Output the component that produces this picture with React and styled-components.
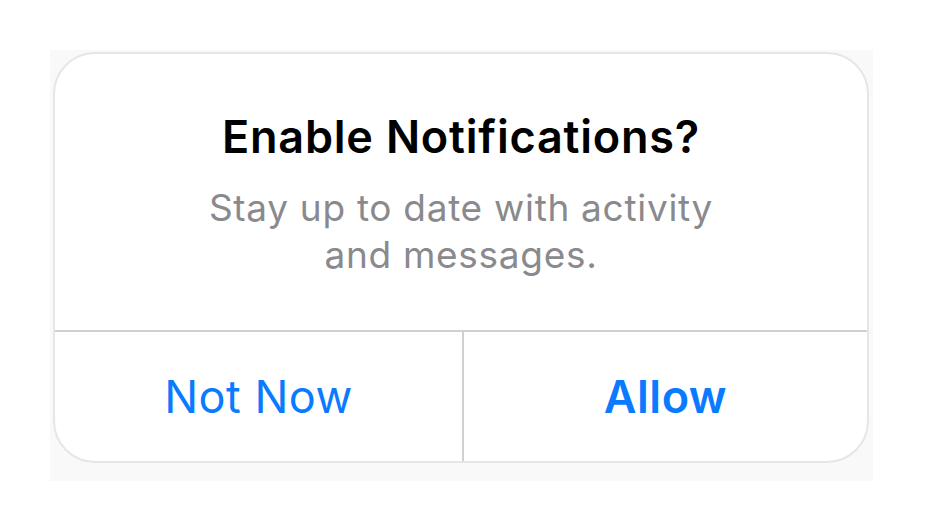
import React from 'react';
import styled, { createGlobalStyle } from 'styled-components';

const GlobalStyle = createGlobalStyle`
  html, body {
    margin: 0;
    padding: 0;
    background: #ffffff;
    font-family: Inter, "Noto Sans", "Liberation Sans", sans-serif;
  }
`;

const Page = styled.div`
  width: 925px;
  height: 532px;
  padding: 50px 0 0 50px;
  box-sizing: border-box;
`;

const Backdrop = styled.div`
  width: 823px;
  height: 431px;
  background: #f9f9f9;
  padding: 2px 4px 0 3px;
  box-sizing: border-box;
`;

const Alert = styled.div`
  width: 816px;
  height: 411px;
  box-sizing: border-box;
  background: #ffffff;
  border: 2px solid #e6e6e6;
  border-radius: 42px;
  display: flex;
  flex-direction: column;
  overflow: hidden;
`;

const Body = styled.div`
  height: 276px;
  box-sizing: border-box;
  padding-top: 57px;
  display: flex;
  flex-direction: column;
  align-items: center;
  text-align: center;
`;

const Title = styled.h1`
  margin: 0;
  font-size: 45px;
  line-height: 52px;
  font-weight: 600;
  color: #000000;
  letter-spacing: 0.8px;
`;

const Message = styled.p`
  margin: 21px 0 0;
  font-size: 37px;
  line-height: 47px;
  font-weight: 400;
  color: #8a8a8e;
  letter-spacing: 0.7px;
  width: 560px;
`;

const Actions = styled.div`
  flex: 1;
  display: grid;
  grid-template-columns: 407px 1fr;
  border-top: 2px solid #d0d0d0;
`;

const Action = styled.button`
  border: 0;
  background: transparent;
  font-family: inherit;
  font-size: 45px;
  letter-spacing: 0.5px;
  font-weight: ${p => (p.$primary ? 600 : 400)};
  color: #0a7aff;
  display: flex;
  align-items: center;
  justify-content: center;
  padding: 0;
  cursor: pointer;
  & + & {
    border-left: 2px solid #d0d0d0;
  }
`;

export default function App() {
  return (
    <>
      <GlobalStyle />
      <Page>
        <Backdrop>
          <Alert>
            <Body>
              <Title>Enable Notifications?</Title>
              <Message>Stay up to date with activity and messages.</Message>
            </Body>
            <Actions>
              <Action>Not Now</Action>
              <Action $primary>Allow</Action>
            </Actions>
          </Alert>
        </Backdrop>
      </Page>
    </>
  );
}
